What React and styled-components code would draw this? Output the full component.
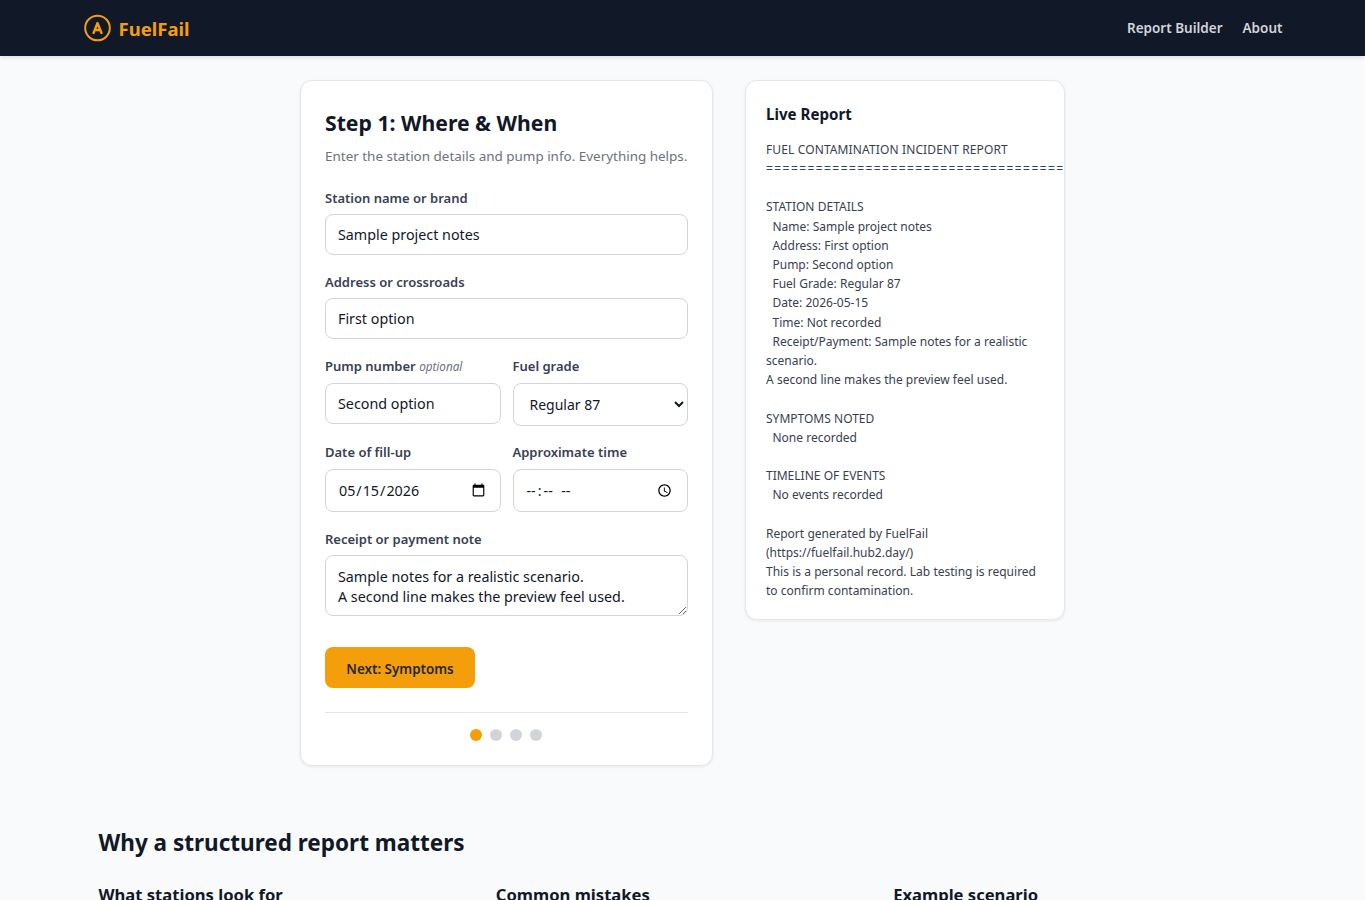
import React from 'react';
import styled, { createGlobalStyle } from 'styled-components';

const GlobalStyle = createGlobalStyle`
  * { box-sizing: border-box; }
  body {
    margin: 0;
    background: #f9fafb;
    color: #111827;
    font-family: "Noto Sans", "Open Sans", sans-serif;
  }
`;

const Header = styled.header`
  background: #111827;
  height: 56px;
  box-shadow: 0 2px 4px rgba(0, 0, 0, 0.1);
`;

const HeaderInner = styled.div`
  max-width: 1200px;
  height: 100%;
  margin: 0 auto;
  display: flex;
  align-items: center;
  justify-content: space-between;
`;

const Brand = styled.a`
  display: flex;
  align-items: center;
  gap: 8px;
  color: #f59e0b;
  font-size: 18.5px;
  font-weight: 700;
`;

const Nav = styled.nav`
  display: flex;
  gap: 20px;
`;

const NavLink = styled.a`
  color: #d1d5db;
  font-size: 13.5px;
  font-weight: 600;
`;

const Main = styled.main`
  display: flex;
  justify-content: center;
  align-items: flex-start;
  gap: 32px;
  padding-top: 24px;
`;

const Card = styled.section`
  background: #fff;
  border: 1px solid #e5e7eb;
  border-radius: 12px;
  box-shadow: 0 1px 3px rgba(0, 0, 0, 0.08);
`;

const FormCard = styled(Card)`
  width: 413px;
  padding: 25px 24px 24px;
`;

const ReportCard = styled(Card)`
  width: 320px;
  padding: 20px 0 18px 20px;
  overflow: hidden;
`;

const StepTitle = styled.h2`
  margin: 0 0 6px;
  font-size: 21.2px;
  line-height: 34px;
  font-weight: 700;
`;

const StepHint = styled.p`
  margin: 0 0 22px;
  font-size: 13.45px;
  line-height: 20px;
  color: #6b7280;
  white-space: nowrap;
`;

const Label = styled.label`
  display: block;
  margin-bottom: 6px;
  font-size: 13px;
  line-height: 20px;
  font-weight: 600;
  color: #374151;
`;

const Field = styled.div`
  margin-bottom: 17px;
  min-width: 0;
`;

const RowField = styled(Field)`
  margin-bottom: 16px;

  ${Label} {
    margin-bottom: 7px;
  }
`;

const NoteLabel = styled(Label)`
  padding-top: 1px;
`;

const Optional = styled.span`
  font-size: 11.7px;
  font-weight: 400;
  font-style: italic;
  color: #6b7280;
`;

const inputStyles = `
  display: block;
  width: 100%;
  border: 1px solid #d1d5db;
  border-radius: 8px;
  background: #fff;
  color: #111827;
  font-family: inherit;
  font-size: 14.3px;
  outline: none;
`;

const Input = styled.input`
  ${inputStyles}
  height: ${props => props.$height}px;
  padding: 0 12px;
`;

const TimeInput = styled(Input)`
  &::-webkit-datetime-edit-text {
    padding: 0 1px;
  }
  &::-webkit-datetime-edit-hour-field,
  &::-webkit-datetime-edit-minute-field {
    letter-spacing: 1px;
  }
  &::-webkit-datetime-edit-ampm-field {
    margin-left: 2px;
    letter-spacing: 1px;
  }
`;

const Select = styled.select`
  ${inputStyles}
  height: 43px;
  padding: 0 8px 0 12px;
  font-size: 14px;
`;

const TextArea = styled.textarea`
  ${inputStyles}
  height: 61px;
  padding: 11px 12px 0;
  line-height: 20px;
`;

const Row = styled.div`
  display: grid;
  grid-template-columns: 1fr 1fr;
  gap: 12px;
`;

const NextButton = styled.button`
  display: block;
  margin-top: 31px;
  width: 150px;
  height: 41px;
  padding: 2px 0 0;
  border: 0;
  border-radius: 8px;
  background: #f59e0b;
  color: #1f2937;
  font-family: inherit;
  font-size: 13.4px;
  font-weight: 600;
`;

const Dots = styled.div`
  display: flex;
  justify-content: center;
  gap: 8px;
  margin-top: 24px;
  padding: 16px 2px 0 0;
  border-top: 1px solid #e5e7eb;
`;

const Dot = styled.span`
  width: 12px;
  height: 12px;
  border-radius: 50%;
  background: ${props => (props.$active ? '#f59e0b' : '#d1d5db')};
`;

const ReportTitle = styled.h3`
  margin: 0 0 12.8px;
  font-size: 15.1px;
  line-height: 26px;
  font-weight: 700;
`;

const ReportText = styled.pre`
  margin: 0;
  font-family: inherit;
  font-size: 12px;
  line-height: 19.2px;
  color: #374151;
  white-space: pre-wrap;
  word-spacing: 0.1px;
  padding-right: 20px;
`;

const Rule = styled.div`
  font-size: 12px;
  line-height: 19.2px;
  color: #374151;
  white-space: nowrap;
  letter-spacing: ${props => props.$spacing}px;
`;

const Explainer = styled.section`
  max-width: 1200px;
  margin: 0 auto;
  padding: 59px 16px 40px;
`;

const ExplainerTitle = styled.h2`
  margin: 0 0 22px;
  font-size: 22.5px;
  line-height: 36px;
  font-weight: 700;
`;

const Columns = styled.div`
  display: grid;
  grid-template-columns: repeat(3, 1fr);
  gap: 24px;
`;

const ColumnTitle = styled.h3`
  margin: 0 0 8px;
  font-size: 16.6px;
  line-height: 24px;
  font-weight: 700;
`;

const ColumnText = styled.p`
  margin: 0;
  font-size: 14px;
  line-height: 22px;
  color: #4b5563;
`;

const report = `
STATION DETAILS
  Name: Sample project notes
  Address: First option
  Pump: Second option
  Fuel Grade: Regular 87
  Date: 2026-05-15
  Time: Not recorded
  Receipt/Payment: Sample notes for a realistic scenario.
A second line makes the preview feel used.

SYMPTOMS NOTED
  None recorded

TIMELINE OF EVENTS
  No events recorded

Report generated by FuelFail (https://fuelfail.hub2.day/)
This is a personal record. Lab testing is required to confirm contamination.`;

const Logo = () => (
  <svg width="28" height="28" viewBox="0 0 28 28" fill="none" stroke="#f59e0b" strokeWidth="2" strokeLinecap="round" strokeLinejoin="round">
    <circle cx="14.500" cy="14" r="12.300" />
    <path strokeWidth="2.300" d="M10.500 19 14.500 9l4 10M11.700 16h5.600" />
  </svg>
);

export default function App() {
  return (
    <>
      <GlobalStyle />
      <Header>
        <HeaderInner>
          <Brand><Logo />FuelFail</Brand>
          <Nav>
            <NavLink>Report Builder</NavLink>
            <NavLink>About</NavLink>
          </Nav>
        </HeaderInner>
      </Header>
      <Main>
        <FormCard>
          <StepTitle>Step 1: Where &amp; When</StepTitle>
          <StepHint>Enter the station details and pump info. Everything helps.</StepHint>
          <Field>
            <Label>Station name or brand</Label>
            <Input $height={41} defaultValue="Sample project notes" />
          </Field>
          <Field>
            <Label>Address or crossroads</Label>
            <Input $height={41} defaultValue="First option" />
          </Field>
          <Row>
            <RowField>
              <Label>Pump number <Optional>optional</Optional></Label>
              <Input $height={41} defaultValue="Second option" />
            </RowField>
            <RowField>
              <Label>Fuel grade</Label>
              <Select defaultValue="Regular 87">
                <option>Regular 87</option>
                <option>Mid-grade 89</option>
                <option>Premium 91+</option>
                <option>Diesel</option>
              </Select>
            </RowField>
          </Row>
          <Row>
            <RowField>
              <Label>Date of fill-up</Label>
              <Input $height={43} type="date" defaultValue="2026-05-15" />
            </RowField>
            <RowField>
              <Label>Approximate time</Label>
              <TimeInput $height={43} type="time" />
            </RowField>
          </Row>
          <NoteLabel>Receipt or payment note</NoteLabel>
          <TextArea defaultValue={'Sample notes for a realistic scenario.\nA second line makes the preview feel used.'} />
          <NextButton>Next: Symptoms</NextButton>
          <Dots>
            <Dot $active />
            <Dot />
            <Dot />
            <Dot />
          </Dots>
        </FormCard>
        <ReportCard>
          <ReportTitle>Live Report</ReportTitle>
          <Rule $spacing={0.12}>FUEL CONTAMINATION INCIDENT REPORT</Rule>
          <Rule $spacing={1.43}>{'='.repeat(36)}</Rule>
          <ReportText>{report}</ReportText>
        </ReportCard>
      </Main>
      <Explainer>
        <ExplainerTitle>Why a structured report matters</ExplainerTitle>
        <Columns>
          <div>
            <ColumnTitle>What stations look for</ColumnTitle>
            <ColumnText>Dates, pump numbers and a receipt let a station match your fill-up to its own delivery records.</ColumnText>
          </div>
          <div>
            <ColumnTitle>Common mistakes</ColumnTitle>
            <ColumnText>Waiting too long, throwing away the receipt and forgetting which pump you used.</ColumnText>
          </div>
          <div>
            <ColumnTitle>Example scenario</ColumnTitle>
            <ColumnText>A driver notices rough idling a mile after filling up and writes down what happened.</ColumnText>
          </div>
        </Columns>
      </Explainer>
    </>
  );
}
